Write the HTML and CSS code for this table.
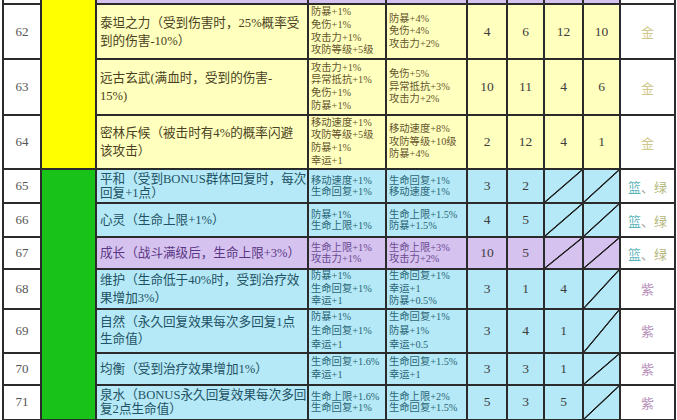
FILE: index.html
```html
<!DOCTYPE html>
<html lang="zh">
<head>
<meta charset="utf-8">
<title>天赋表</title>
<link rel="stylesheet" href="styles.css">
</head>
<body>
<div class="sheet">
<table class="grid">
<colgroup>
<col class="c-no"><col class="c-band"><col class="c-desc"><col class="c-a1"><col class="c-a2">
<col class="c-n"><col class="c-n2"><col class="c-n3"><col class="c-n2"><col class="c-q">
</colgroup>
<tbody>
<tr class="h61 ty">
<td class="no"></td>
<td class="band yellow" rowspan="4"></td>
<td class="desc p"></td>
<td class="attr p"></td>
<td class="attr p"></td>
<td class="num p"></td><td class="num p"></td><td class="num p"></td><td class="num p"></td>
<td class="q"></td>
</tr>
<tr class="h62 ty">
<td class="no">62</td>
<td class="desc">泰坦之力（受到伤害时，25%概率受<br>到的伤害-10%）</td>
<td class="attr">防暴+1%<br>免伤+1%<br>攻击力+1%<br>攻防等级+5级</td>
<td class="attr">防暴+4%<br>免伤+4%<br>攻击力+2%</td>
<td class="num">4</td><td class="num">6</td><td class="num">12</td><td class="num">10</td>
<td class="q gold">金</td>
</tr>
<tr class="h63 ty">
<td class="no">63</td>
<td class="desc">远古玄武(满血时，受到的伤害-<br>15%)</td>
<td class="attr">攻击力+1%<br>异常抵抗+1%<br>免伤+1%<br>防暴+1%</td>
<td class="attr">免伤+5%<br>异常抵抗+3%<br>攻击力+2%</td>
<td class="num">10</td><td class="num">11</td><td class="num">4</td><td class="num">6</td>
<td class="q gold">金</td>
</tr>
<tr class="h64 ty">
<td class="no">64</td>
<td class="desc">密林斥候（被击时有4%的概率闪避<br>该攻击）</td>
<td class="attr">移动速度+1%<br>攻防等级+5级<br>防暴+1%<br>幸运+1</td>
<td class="attr">移动速度+8%<br>攻防等级+10级<br>防暴+4%</td>
<td class="num">2</td><td class="num">12</td><td class="num">4</td><td class="num">1</td>
<td class="q gold">金</td>
</tr>
<tr class="h65 tb tight">
<td class="no">65</td>
<td class="band green" rowspan="7"></td>
<td class="desc">平和（受到BONUS群体回复时，每次<br>回复+1点）</td>
<td class="attr">移动速度+1%<br>生命回复+1%</td>
<td class="attr">生命回复+1%<br>移动速度+1%</td>
<td class="num">3</td><td class="num">2</td><td class="num slash"></td><td class="num slash"></td>
<td class="q"><span class="blue">篮</span><span class="sep">、</span><span class="olive">绿</span></td>
</tr>
<tr class="h66 tb tight">
<td class="no">66</td>
<td class="desc">心灵（生命上限+1%）</td>
<td class="attr">防暴+1%<br>生命上限+1%</td>
<td class="attr">生命上限+1.5%<br>防暴+1.5%</td>
<td class="num">4</td><td class="num">5</td><td class="num slash"></td><td class="num slash"></td>
<td class="q"><span class="blue">篮</span><span class="sep">、</span><span class="olive">绿</span></td>
</tr>
<tr class="h67 tp tight">
<td class="no">67</td>
<td class="desc">成长（战斗满级后，生命上限+3%）</td>
<td class="attr">生命上限+1%<br>攻击力+1%</td>
<td class="attr">生命上限+3%<br>攻击力+2%</td>
<td class="num">10</td><td class="num">5</td><td class="num slash"></td><td class="num slash"></td>
<td class="q"><span class="blue">篮</span><span class="sep">、</span><span class="olive">绿</span></td>
</tr>
<tr class="h68 tb">
<td class="no">68</td>
<td class="desc">维护（生命低于40%时，受到治疗效<br>果增加3%）</td>
<td class="attr">防暴+1%<br>生命回复+1%<br>幸运+1</td>
<td class="attr">生命回复+1%<br>幸运+1<br>防暴+0.5%</td>
<td class="num">3</td><td class="num">1</td><td class="num">4</td><td class="num slash"></td>
<td class="q purple">紫</td>
</tr>
<tr class="h69 tb loose">
<td class="no">69</td>
<td class="desc">自然（永久回复效果每次多回复1点<br>生命值）</td>
<td class="attr">防暴+1%<br>生命回复+1%<br>幸运+1</td>
<td class="attr">生命回复+1%<br>防暴+1%<br>幸运+0.5</td>
<td class="num">3</td><td class="num">4</td><td class="num">1</td><td class="num slash"></td>
<td class="q purple">紫</td>
</tr>
<tr class="h70 tb">
<td class="no">70</td>
<td class="desc">均衡（受到治疗效果增加1%）</td>
<td class="attr">生命回复+1.6%<br>幸运+1</td>
<td class="attr">生命回复+1.5%<br>幸运+1</td>
<td class="num">3</td><td class="num">3</td><td class="num">1</td><td class="num slash"></td>
<td class="q purple">紫</td>
</tr>
<tr class="h71 tb tight">
<td class="no">71</td>
<td class="desc">泉水（BONUS永久回复效果每次多回<br>复2点生命值）</td>
<td class="attr">生命上限+1.6%<br>生命回复+1%</td>
<td class="attr">生命上限+2%<br>生命回复+1.5%</td>
<td class="num">5</td><td class="num">3</td><td class="num">5</td><td class="num slash"></td>
<td class="q purple">紫</td>
</tr>
</tbody>
</table>
</div>
</body>
</html>
```

FILE: styles.css
```css
html, body {
  margin: 0;
  padding: 0;
  background: #ffffff;
}

.sheet {
  width: 677px;
  height: 420px;
  overflow: hidden;
  padding-left: 2px;
  box-sizing: border-box;
}

.grid {
  border-collapse: collapse;
  table-layout: fixed;
  width: 674px;
  margin-top: -17px;
  font-family: "Liberation Serif", "Noto Sans CJK SC", serif;
}

.c-no { width: 38px; }
.c-band { width: 55px; }
.c-desc { width: 212px; }
.c-a1 { width: 78px; }
.c-a2 { width: 81px; }
.c-n { width: 40px; }
.c-n2 { width: 37px; }
.c-n3 { width: 39px; }
.c-q { width: 55px; }

.grid td {
  border: 2px solid #2b2b2b;
  padding: 0;
  vertical-align: middle;
  overflow: hidden;
  white-space: nowrap;
}

.h61 { height: 20px; }
.h62 { height: 55px; }
.h63 { height: 56px; }
.h64 { height: 54px; }
.h65 { height: 34px; }
.h66 { height: 34px; }
.h67 { height: 32px; }
.h68 { height: 39px; }
.h69 { height: 44px; }
.h70 { height: 32px; }
.h71 { height: 35px; }

.no {
  background: #ffffff;
  text-align: center;
  font-size: 13px;
  color: #555555;
}

.band.yellow { background: #ffff00; }
.band.green { background: #19c219; }

.desc {
  padding-left: 3px !important;
  font-size: 12.6px;
  line-height: 18px;
}

.tight .desc { line-height: 14px; }
.loose .desc { line-height: 17px; }

.attr {
  padding-left: 2px !important;
  font-size: 10.3px;
  line-height: 12.6px;
}

.tight .attr { line-height: 11.5px; }
.loose .attr { line-height: 14px; }

.num {
  text-align: center;
  font-size: 13.5px;
  color: #3d3d3d;
}

.q {
  background: #ffffff;
  text-align: center;
  font-size: 13px;
}

.gold { color: #cfc88a; }
.purple { color: #b68fb8; }
.blue { color: #5db6bb; }
.olive { color: #b3b77a; }
.sep { color: #9a9a9a; }

/* row colour themes */
.ty .desc, .ty .attr, .ty .num { background-color: #ffffbe; }
.ty .desc { color: #4a3f22; }
.ty .attr { color: #66572e; }

.tb .desc, .tb .attr, .tb .num { background-color: #b5e9f7; }
.tb .desc { color: #1f5264; }
.tb .attr { color: #2b6676; }

.tp .desc, .tp .attr, .tp .num { background-color: #d6c2ef; }
.tp .desc { color: #5a3684; }
.tp .attr { color: #6a4a92; }

.h61 .p { background-color: #d6c2ef; }

.slash {
  background-image: linear-gradient(to bottom right,
    transparent calc(50% - 1px),
    #222222 calc(50% - 0.4px),
    #222222 calc(50% + 0.4px),
    transparent calc(50% + 1px));
}
```
